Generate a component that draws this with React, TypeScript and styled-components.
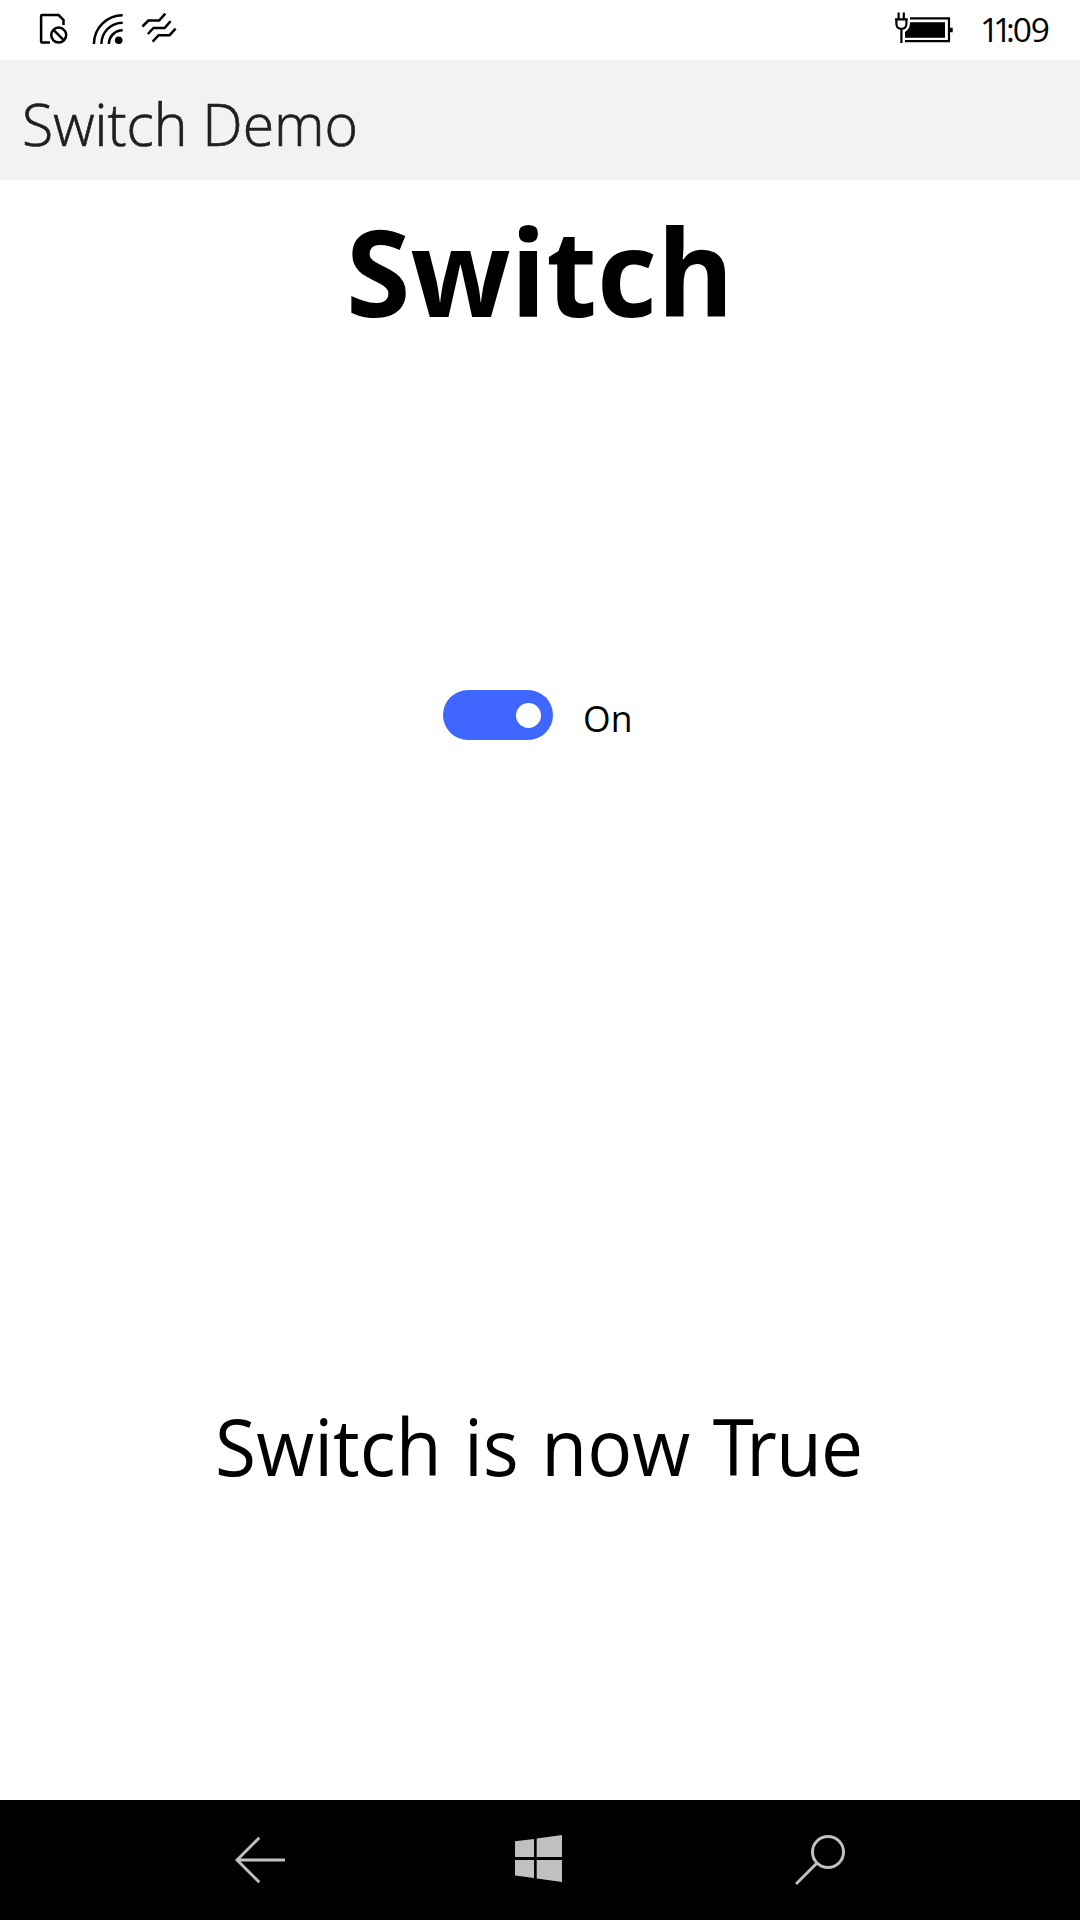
import React, { useState } from "react";
import styled, { createGlobalStyle } from "styled-components";

const GlobalStyle = createGlobalStyle`
  * { box-sizing: border-box; }
  body { margin: 0; background: #fff; }
`;

const Screen = styled.div`
  width: 1080px;
  height: 1920px;
  display: flex;
  flex-direction: column;
  overflow: hidden;
  background: #fff;
  color: #000;
  font-family: "Open Sans", "Noto Sans", sans-serif;
`;

const StatusBar = styled.header`
  height: 60px;
  display: flex;
  justify-content: space-between;
  padding: 0 0 0 38px;
`;

const StatusGroup = styled.div`
  display: flex;
  align-items: flex-start;
`;

const Icon = styled.svg`
  display: block;
  flex: none;
`;

const Clock = styled.time`
  width: 128px;
  padding-left: 28px;
  font-size: 33.5px;
  line-height: 59px;
  white-space: nowrap;
`;

const Kern = styled.span<{ $by: number }>`
  letter-spacing: ${(p) => p.$by}px;
`;

const TitleBar = styled.div`
  height: 120px;
  padding: 3px 0 0 22px;
  background: #f2f2f2;
`;

const Title = styled.h1`
  margin: 0;
  font-size: 59px;
  font-weight: 300;
  line-height: 120px;
  color: #1f1f1f;
  -webkit-text-stroke: 0.7px #1f1f1f;
  transform: scaleX(0.969);
  transform-origin: left;
`;

const Content = styled.main`
  height: 1620px;
  display: grid;
  grid-template-rows: 178px 714px 728px;
`;

const Heading = styled.h2`
  margin: 0;
  padding-top: 1px;
  font-size: 121px;
  font-weight: 700;
  line-height: 178px;
  text-align: center;
  transform: scaleX(0.966);
`;

const SwitchRow = styled.label`
  display: flex;
  align-items: center;
  gap: 30px;
  padding-left: 443px;
`;

const Track = styled.button<{ $on: boolean }>`
  width: 110px;
  height: 50px;
  display: flex;
  align-items: center;
  justify-content: ${(p) => (p.$on ? "flex-end" : "flex-start")};
  padding: 1px 12px 0;
  border: 0;
  border-radius: 25px;
  background: ${(p) => (p.$on ? "#3f66ff" : "#999")};
`;

const Knob = styled.span`
  width: 25px;
  height: 25px;
  border-radius: 50%;
  background: #fff;
`;

const SwitchLabel = styled.span`
  padding-top: 6px;
  font-size: 37px;
  line-height: 50px;
  transform: scaleX(0.96);
  transform-origin: left;
`;

const Status = styled.p`
  margin: 0;
  padding: 19px 3px 0 0;
  font-size: 78px;
  line-height: 711px;
  text-align: center;
  word-spacing: 3.2px;
  white-space: nowrap;
  transform: scaleX(0.96);
`;

const NavBar = styled.nav`
  height: 120px;
  display: grid;
  grid-template-columns: 280px 280px 1fr;
  align-items: center;
  padding-left: 235px;
  background: #000;
  color: #c0c0c0;
`;

export default function App() {
  const [on, setOn] = useState(true);
  return (
    <>
      <GlobalStyle />
      <Screen>
        <StatusBar>
          <StatusGroup>
            <Icon width="142" height="60" viewBox="38 0 142 60" fill="none" stroke="#000" strokeWidth="2.5">
              <path d="M50 42.6H42.2Q41.1 42.6 41.1 41.5V16.1Q41.1 15 42.2 15H58.6L63.5 19.9V25" />
              <circle cx="58.7" cy="35.1" r="7.5" />
              <path d="M53.5 29.8 64 40.4" />
              <path d="M93.9 44A28.8 28.8 0 0 1 122.7 15.2M101.4 44A21.3 21.3 0 0 1 122.7 22.7M108.9 44A13.8 13.8 0 0 1 122.7 30.2" />
              <circle cx="118.7" cy="40.2" r="3.8" fill="#000" stroke="none" />
              <path d="M142.4 26.5 148.4 20.5H159.1L165.3 13.6M147.9 34 153.5 28H164.6L170.6 21.2M152.6 41.7 158.7 35.2H169.6L175.6 28.7" />
            </Icon>
          </StatusGroup>
          <StatusGroup>
            <Icon width="60" height="60" viewBox="892 0 60 60" overflow="visible" fill="none" stroke="#000" strokeWidth="2.2">
              <path d="M898.6 12.5V19M903.8 12.5V19M895 19.3H907.8M896.4 19.3V23.8Q896.4 28.8 901.4 28.8T906.4 23.8V19.3M901.4 28.8V43" />
              <path d="M910 18.3H949V41.2H905" />
              <path d="M910 22.3H945V37.7H905V32Q910 29.5 910 22.3ZM950 27.7H952.7V32.3H950Z" fill="#000" stroke="none" />
            </Icon>
            <Clock>
              <Kern $by={-6.2}>11</Kern>
              <Kern $by={-2}>:</Kern>
              <Kern $by={-1.2}>09</Kern>
            </Clock>
          </StatusGroup>
        </StatusBar>
        <TitleBar>
          <Title>Switch Demo</Title>
        </TitleBar>
        <Content>
          <Heading>Switch</Heading>
          <SwitchRow>
            <Track $on={on} role="switch" aria-checked={on} onClick={() => setOn(!on)}>
              <Knob />
            </Track>
            <SwitchLabel>{on ? "On" : "Off"}</SwitchLabel>
          </SwitchRow>
          <Status>
            Switch is now{" "}
            {on ? (
              <>
                <Kern $by={-8}>T</Kern>
                <Kern $by={-1}>rue</Kern>
              </>
            ) : (
              "False"
            )}
          </Status>
        </Content>
        <NavBar>
          <Icon width="52" height="120" viewBox="235 1800 52 120" fill="none" stroke="currentColor" strokeWidth="3">
            <path d="M285 1860H238M259.3 1837.7 237 1860 259.3 1882.3" />
          </Icon>
          <Icon width="48" height="120" viewBox="515 1800 48 120" fill="currentColor">
            <path d="M515 1841.3 534 1839V1857H515ZM536.7 1838.5 562 1835V1857H536.7ZM515 1860H534V1878L515 1875.5ZM536.7 1860H562V1882L536.7 1878.5Z" />
          </Icon>
          <Icon width="52" height="120" viewBox="795 1800 52 120" fill="none" stroke="currentColor" strokeWidth="3">
            <circle cx="828" cy="1852" r="15.5" />
            <path d="M817 1863 796 1884" />
          </Icon>
        </NavBar>
      </Screen>
    </>
  );
}
